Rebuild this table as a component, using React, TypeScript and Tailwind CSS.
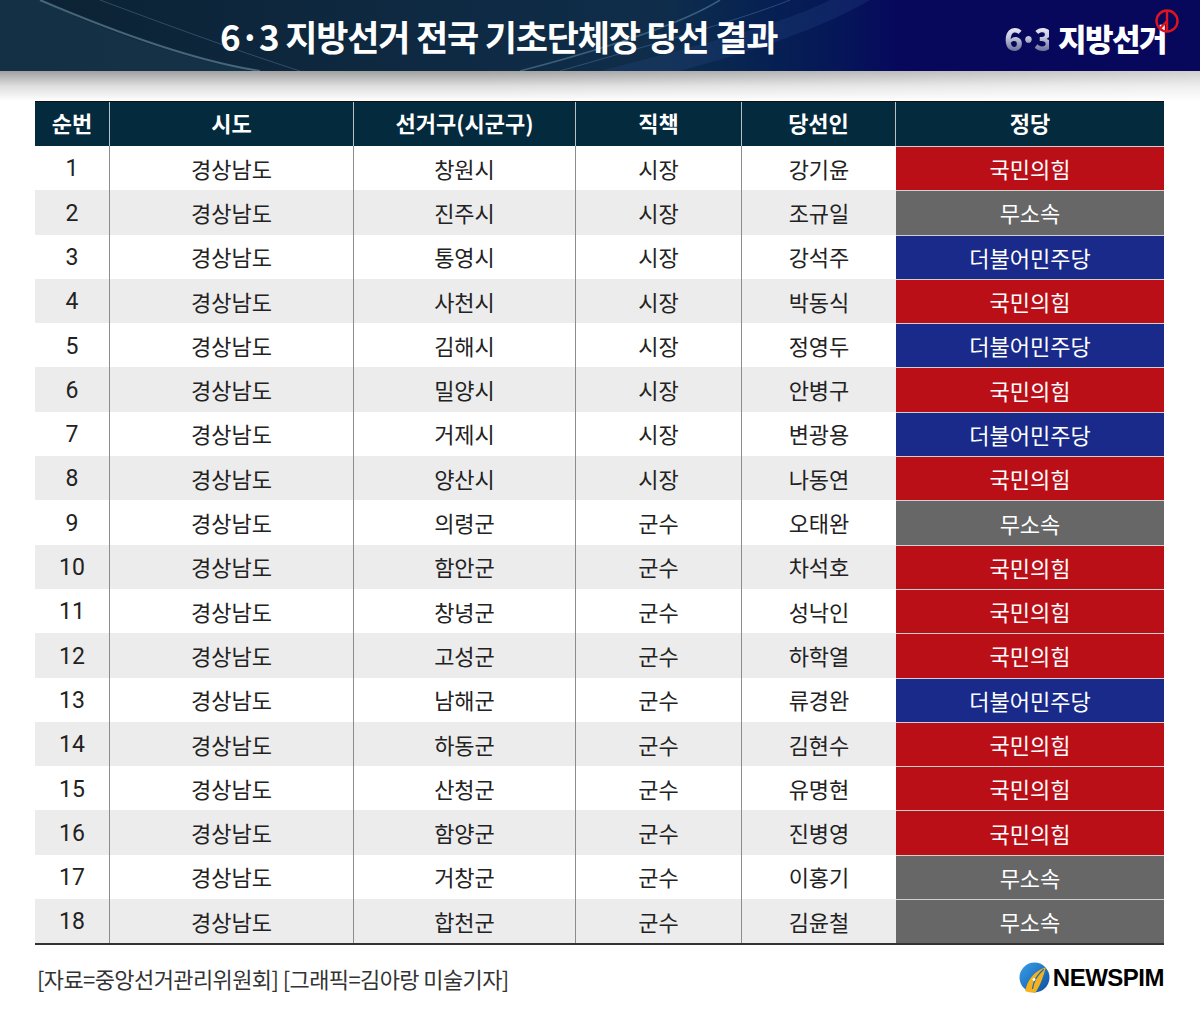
const rows: [string, string, string, string][] = [
  ["창원시", "시장", "강기윤", "국민의힘"],
  ["진주시", "시장", "조규일", "무소속"],
  ["통영시", "시장", "강석주", "더불어민주당"],
  ["사천시", "시장", "박동식", "국민의힘"],
  ["김해시", "시장", "정영두", "더불어민주당"],
  ["밀양시", "시장", "안병구", "국민의힘"],
  ["거제시", "시장", "변광용", "더불어민주당"],
  ["양산시", "시장", "나동연", "국민의힘"],
  ["의령군", "군수", "오태완", "무소속"],
  ["함안군", "군수", "차석호", "국민의힘"],
  ["창녕군", "군수", "성낙인", "국민의힘"],
  ["고성군", "군수", "하학열", "국민의힘"],
  ["남해군", "군수", "류경완", "더불어민주당"],
  ["하동군", "군수", "김현수", "국민의힘"],
  ["산청군", "군수", "유명현", "국민의힘"],
  ["함양군", "군수", "진병영", "국민의힘"],
  ["거창군", "군수", "이홍기", "무소속"],
  ["합천군", "군수", "김윤철", "무소속"],
];

const partyBg: Record<string, string> = {
  국민의힘: "bg-[#bb0f18]",
  무소속: "bg-[#676767]",
  더불어민주당: "bg-[#1a2a8a]",
};

const cols = "grid grid-cols-[75px_244px_222px_166px_154px_268px]";

function Stamp() {
  return (
    <svg width="26" height="26" viewBox="0 0 26 26" className="absolute -right-[14px] -top-[14px]">
      <circle cx="13" cy="13" r="10.5" fill="none" stroke="#e0141e" strokeWidth="2.4" />
      <path d="M13 3 V23 M13 13 L6.5 20" stroke="#e0141e" strokeWidth="2.4" fill="none" />
    </svg>
  );
}

function NewspimMark() {
  return (
    <svg width="31" height="31" viewBox="0 0 30 30">
      <defs>
        <linearGradient id="np" x1="0" y1="0" x2="1" y2="1">
          <stop offset="0" stopColor="#3aa0e8" />
          <stop offset="1" stopColor="#0b4fa0" />
        </linearGradient>
      </defs>
      <circle cx="15" cy="15" r="14.5" fill="url(#np)" />
      <path d="M6 28 C 8 18, 14 9, 26 5 C 24 12, 22 20, 16 29.5 C 12 29.8, 9 29.3, 6 28 Z" fill="#f4b21c" />
      <path d="M13 26 C 14 19, 18 12, 24 7" stroke="#1769c0" strokeWidth="1.2" fill="none" />
      <circle cx="14.5" cy="17" r="1.4" fill="#fff" />
    </svg>
  );
}

export default function App() {
  return (
    <div
      className="w-[1200px] h-[1024px] bg-white overflow-hidden"
      style={{ fontFamily: "'Noto Sans CJK KR', 'Noto Sans', sans-serif" }}
    >
      {/* title band */}
      <div className="relative h-[71px] bg-gradient-to-r from-[#0c2233] via-[#0f2d4a] via-55% to-[#07075c] to-75% overflow-hidden">
        <svg className="absolute inset-0" width="1200" height="71" viewBox="0 0 1200 71">
          <path d="M0 0 H40 C 90 25, 170 55, 250 71 H0 Z" fill="#1b3d52" opacity="0.55" />
          <path d="M40 0 C 110 30, 190 60, 260 71" stroke="#7fa5b8" strokeWidth="2" fill="none" opacity="0.5" />
          <path d="M100 0 C 180 30, 250 55, 300 71" stroke="#5f8aa0" strokeWidth="1" fill="none" opacity="0.4" />
          <path d="M520 71 C 600 50, 680 25, 720 0" stroke="#6f9fc0" strokeWidth="1.5" fill="none" opacity="0.45" />
          <path d="M560 71 C 650 45, 740 20, 790 0" stroke="#5a86c0" strokeWidth="1" fill="none" opacity="0.4" />
          <path d="M600 71 C 700 45, 780 25, 830 0 H870 C 820 30, 740 55, 680 71 Z" fill="#2a4a8a" opacity="0.25" />
        </svg>
        <div className="relative flex h-full items-center">
          <h1 className="ml-[220px] text-[35px] font-bold text-white tracking-[-1.2px] leading-none">
            6·3 지방선거 전국 기초단체장 당선 결과
          </h1>
          <div className="relative ml-auto mr-[34px] mt-[4px] flex items-center">
            <span className="bg-gradient-to-b from-white via-[#c4c7dc] to-[#5d6290] bg-clip-text text-[31px] font-black tracking-[-4px] text-transparent leading-none">
              6·3
            </span>
            <span className="ml-[9px] text-[31px] font-black text-white tracking-[-1.5px] leading-none">지방선거</span>
            <Stamp />
          </div>
        </div>
      </div>

      {/* shadow */}
      <div className="relative h-[30px] bg-gradient-to-b from-[#a0a0a0] via-[#dedede] to-white">
        <div className="absolute inset-0 bg-gradient-to-r from-transparent via-transparent via-40% to-white/50" />
      </div>

      {/* table */}
      <div className="mx-[35px] w-[1129px]">
        <div className={`${cols} h-[45px] border-t border-[#111] bg-[#032a3d] text-[22px] font-bold text-white`}>
          {["순번", "시도", "선거구(시군구)", "직책", "당선인", "정당"].map((h, i) => (
            <div
              key={h}
              className={`flex items-center justify-center pb-[3px] ${i < 5 ? "border-r border-[#b8c0c6]" : ""}`}
            >
              {h}
            </div>
          ))}
        </div>
        <div className="border-b-2 border-[#333]">
          {rows.map(([gu, role, name, party], i) => (
            <div
              key={i}
              className={`${cols} h-[44.3px] text-[22px] text-[#222] ${i % 2 === 1 ? "bg-[#ececec]" : "bg-white"}`}
            >
              <div className="flex items-center justify-center border-r border-[#8c8c8c] pt-[3px] text-[23px]" style={{ fontFamily: "Roboto, sans-serif" }}>
                {i + 1}
              </div>
              <div className="flex items-center justify-center border-r border-[#8c8c8c]">경상남도</div>
              <div className="flex items-center justify-center border-r border-[#8c8c8c]">{gu}</div>
              <div className="flex items-center justify-center border-r border-[#8c8c8c]">{role}</div>
              <div className="flex items-center justify-center">{name}</div>
              <div className={`flex items-center justify-center border-t border-[#cfcfcf] text-white ${partyBg[party]}`}>
                {party}
              </div>
            </div>
          ))}
        </div>
        <div className="mt-[17px] flex items-center">
          <span className="ml-[2px] text-[22px] text-[#333] tracking-[-0.6px] leading-[30px]">
            [자료=중앙선거관리위원회] [그래픽=김아랑 미술기자]
          </span>
          <div className="ml-auto flex items-center gap-[3px]">
            <NewspimMark />
            <span
              className="text-[24px] font-black text-black tracking-[-0.5px] leading-none"
              style={{ fontFamily: "'Liberation Sans', Arial, sans-serif" }}
            >
              NEWSPIM
            </span>
          </div>
        </div>
      </div>
    </div>
  );
}
